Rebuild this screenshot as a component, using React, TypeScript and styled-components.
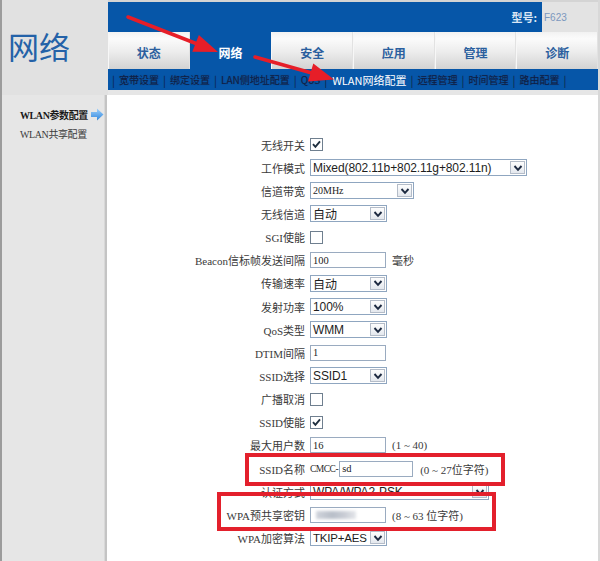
import React from "react";
import styled, { createGlobalStyle } from "styled-components";

const Blue = "#0656a8";
const LabelGray = "#3a3a3a";
const CJK = `"Noto Sans CJK SC", "Liberation Sans", sans-serif`;

const GlobalStyle = createGlobalStyle`
  html, body {
    margin: 0;
    padding: 0;
    background: #ffffff;
  }
  body {
    font-family: ${CJK};
  }
`;

type Row = { label: string; control: React.ReactNode };

const tabs = ["状态", "网络", "安全", "应用", "管理", "诊断"];
const subLinks = [
  "宽带设置",
  "绑定设置",
  "LAN侧地址配置",
  "QoS",
  "WLAN网络配置",
  "远程管理",
  "时间管理",
  "路由配置",
];

export default function App() {
  const rows: Row[] = [
    { label: "无线开关", control: <Check checked /> },
    {
      label: "工作模式",
      control: <Select width={217} value="Mixed(802.11b+802.11g+802.11n)" />,
    },
    { label: "信道带宽", control: <Select width={104} value="20MHz" small /> },
    { label: "无线信道", control: <Select width={77} value="自动" /> },
    { label: "SGI使能", control: <Check /> },
    {
      label: "Beacon信标帧发送间隔",
      control: (
        <>
          <TextBox>100</TextBox>
          <Hint>毫秒</Hint>
        </>
      ),
    },
    { label: "传输速率", control: <Select width={77} value="自动" /> },
    { label: "发射功率", control: <Select width={77} value="100%" /> },
    { label: "QoS类型", control: <Select width={77} value="WMM" /> },
    { label: "DTIM间隔", control: <TextBox>1</TextBox> },
    { label: "SSID选择", control: <Select width={77} value="SSID1" /> },
    { label: "广播取消", control: <Check /> },
    { label: "SSID使能", control: <Check checked /> },
    {
      label: "最大用户数",
      control: (
        <>
          <TextBox>16</TextBox>
          <Hint>(1 ~ 40)</Hint>
        </>
      ),
    },
    {
      label: "SSID名称",
      control: (
        <>
          <Prefix>CMCC-</Prefix>
          <TextBox $width={74}>sd</TextBox>
          <Hint $gap={7}>(0 ~ 27位字符)</Hint>
        </>
      ),
    },
    { label: "认证方式", control: <Select width={179} value="WPA/WPA2-PSK" /> },
    {
      label: "WPA预共享密钥",
      control: (
        <>
          <TextBox>
            <Smudge />
          </TextBox>
          <Hint>(8 ~ 63 位字符)</Hint>
        </>
      ),
    },
    {
      label: "WPA加密算法",
      control: <Select width={77} value="TKIP+AES" tight />,
    },
  ];

  return (
    <>
      <GlobalStyle />
      <Page>
        <Logo>网络</Logo>
        <Header>
          <TopBar>
            <ModelLabel>型号:</ModelLabel>
            <ModelBox>F623</ModelBox>
          </TopBar>
          <Tabs>
            {tabs.map((t) => (
              <Tab key={t} $active={t === "网络"}>
                {t}
              </Tab>
            ))}
          </Tabs>
          <SubNav>
            <Sep>|</Sep>
            {subLinks.map((s) => (
              <React.Fragment key={s}>
                <SubLink $active={s === "WLAN网络配置"}>{s}</SubLink>
                <Sep>|</Sep>
              </React.Fragment>
            ))}
          </SubNav>
        </Header>

        <Sidebar>
          <SideItem $active>
            WLAN参数配置
            <SideArrow />
          </SideItem>
          <SideItem>WLAN共享配置</SideItem>
        </Sidebar>

        <Content>
          <Form>
            {rows.map((r) => (
              <React.Fragment key={r.label}>
                <Label>{r.label}</Label>
                <Field>{r.control}</Field>
              </React.Fragment>
            ))}
          </Form>
        </Content>

        <Marks viewBox="0 0 600 561">
          <line x1="128" y1="17" x2="196" y2="43.5" />
          <polygon points="218,52 192.3,51.8 198.9,34.9" />
          <line x1="255" y1="57" x2="310" y2="72.5" />
          <polygon points="334,79.5 308,81.6 313.3,63.6" />
          <rect x="247" y="455" width="256" height="29" />
          <rect x="219" y="494" width="275" height="35" />
        </Marks>
      </Page>
    </>
  );
}

function Check({ checked }: { checked?: boolean }) {
  return (
    <CheckBox>
      {checked && (
        <svg width="11" height="11" viewBox="0 0 11 11">
          <path
            d="M2 5.2 L4.4 7.8 L9 2.4"
            fill="none"
            stroke="#1f2f3f"
            strokeWidth="1.9"
          />
        </svg>
      )}
    </CheckBox>
  );
}

function Select({
  width,
  value,
  small,
  tight,
}: {
  width: number;
  value: string;
  small?: boolean;
  tight?: boolean;
}) {
  return (
    <SelectBox $width={width}>
      <SelectText $small={small} $tight={tight}>
        {value}
      </SelectText>
      <DropBtn>
        <svg width="10" height="8" viewBox="0 0 10 8">
          <path
            d="M1.5 2 L5 5.8 L8.5 2"
            fill="none"
            stroke="#1c2940"
            strokeWidth="1.9"
          />
        </svg>
      </DropBtn>
    </SelectBox>
  );
}

function SideArrow() {
  return (
    <svg
      width="13"
      height="13"
      viewBox="0 0 13 13"
      style={{ marginLeft: 3, flexShrink: 0 }}
    >
      <defs>
        <linearGradient id="sa" x1="0" y1="0" x2="0" y2="1">
          <stop offset="0" stopColor="#9fd0fb" />
          <stop offset="1" stopColor="#2f86dc" />
        </linearGradient>
      </defs>
      <polygon points="0,4 6,4 6,0.5 12.5,6.5 6,12.5 6,9 0,9" fill="url(#sa)" />
    </svg>
  );
}

const Page = styled.div`
  position: relative;
  width: 600px;
  height: 561px;
  overflow: hidden;
  box-sizing: border-box;
  padding: 0 2px 0 2px;
  background: #d8d8d8;
  box-shadow: inset 2px 0 0 #9c9c9c;
  display: grid;
  grid-template-columns: 106px 1fr;
  grid-template-rows: 95px 1fr;
`;

const Logo = styled.div`
  background: #e1e1e1;
  color: #2462a8;
  font-family: ${CJK};
  font-size: 31px;
  line-height: 1;
  padding: 30px 0 0 6px;
`;

const Header = styled.div`
  display: flex;
  flex-direction: column;
  padding-top: 2px;
  background: linear-gradient(#d4d4d4 0 2px, #e6e6e6 2px);
`;

const TopBar = styled.div`
  height: 30px;
  background: ${Blue};
  display: flex;
  justify-content: flex-end;
  align-items: stretch;
`;

const ModelLabel = styled.div`
  align-self: center;
  margin-right: 5px;
  color: #dbe6f4;
  font-size: 11px;
  font-weight: 700;
  font-family: ${CJK};
`;

const ModelBox = styled.div`
  width: 56px;
  background: #e3e3e3;
  color: #7b98be;
  font-family: "Liberation Sans", sans-serif;
  font-size: 10px;
  display: flex;
  align-items: center;
  padding-left: 2px;
  box-sizing: border-box;
`;

const Tabs = styled.div`
  height: 37px;
  display: grid;
  grid-template-columns: repeat(6, 1fr);
`;

const Tab = styled.div<{ $active?: boolean }>`
  display: flex;
  align-items: center;
  justify-content: center;
  padding-top: 3px;
  box-sizing: border-box;
  font-family: ${CJK};
  font-size: 12px;
  font-weight: 700;
  color: ${(p) => (p.$active ? "#ffffff" : "#2b5f9e")};
  background: ${(p) =>
    p.$active
      ? Blue
      : "linear-gradient(#f2f2f2 0%, #fbfbfb 18%, #ececec 55%, #d3d3d3 100%)"};
  border-right: 1px solid ${(p) => (p.$active ? Blue : "#e2e2e2")};
  border-left: 1px solid ${(p) => (p.$active ? Blue : "#f7f7f7")};
`;

const SubNav = styled.div`
  height: 21px;
  background: ${Blue};
  display: flex;
  align-items: center;
  padding-left: 4px;
  font-family: ${CJK};
  font-size: 10px;
  white-space: nowrap;
`;

const Sep = styled.span`
  color: #0e2246;
  margin: 0 4px 0 0;
  font-size: 11px;
`;

const SubLink = styled.span<{ $active?: boolean }>`
  color: ${(p) => (p.$active ? "#ffffff" : "#0c1f45")};
  font-size: ${(p) => (p.$active ? "11px" : "10px")};
  margin-right: 4px;
  margin-left: ${(p) => (p.$active ? "1px" : "0")};
  text-shadow: ${(p) => (p.$active ? "none" : "0 0 1px #1d3a70")};
`;

const Sidebar = styled.div`
  background: #e6e6e6;
  border-right: 3px solid #c4c4c4;
  box-shadow: inset -1px 0 0 #d8d8d8;
  padding: 10px 0 0 18px;
  display: flex;
  flex-direction: column;
`;

const SideItem = styled.div<{ $active?: boolean }>`
  display: flex;
  align-items: center;
  height: 19px;
  white-space: nowrap;
  font-family: "Liberation Serif", ${CJK};
  font-size: 10px;
  letter-spacing: -0.4px;
  font-weight: ${(p) => (p.$active ? 700 : 400)};
  color: ${(p) => (p.$active ? "#1a1a1a" : "#3a3a3a")};
`;

const Content = styled.div`
  background: #ffffff;
  margin-left: -1px;
`;

const Form = styled.div`
  display: grid;
  grid-template-columns: 198px 1fr;
  grid-auto-rows: 23.15px;
  column-gap: 5px;
  align-items: center;
  padding-top: 38px;
`;

const Label = styled.div`
  text-align: right;
  font-family: "Liberation Serif", ${CJK};
  font-size: 11px;
  color: ${LabelGray};
  white-space: nowrap;
`;

const Field = styled.div`
  display: flex;
  align-items: center;
  height: 100%;
`;

const CheckBox = styled.div`
  width: 13px;
  height: 13px;
  box-sizing: border-box;
  border: 1px solid #6f7f8f;
  background: #ffffff;
  display: flex;
  align-items: center;
  justify-content: center;
`;

const SelectBox = styled.div<{ $width: number }>`
  width: ${(p) => p.$width}px;
  height: 17px;
  box-sizing: border-box;
  border: 1px solid #8fa6c0;
  background: #ffffff;
  display: flex;
  align-items: center;
`;

const SelectText = styled.span<{ $small?: boolean; $tight?: boolean }>`
  flex: 1;
  padding-left: 2px;
  overflow: hidden;
  white-space: nowrap;
  color: #1d1d1d;
  font-family: ${(p) =>
    p.$small ? `"Liberation Serif", serif` : `"Liberation Sans", ${CJK}`};
  font-size: ${(p) => (p.$small ? "10px" : p.$tight ? "11.5px" : "12px")};
  letter-spacing: ${(p) => (p.$tight ? "-0.2px" : p.$small ? "0" : "-0.1px")};
`;

const DropBtn = styled.div`
  width: 15px;
  height: 13px;
  margin-right: 1px;
  flex-shrink: 0;
  box-sizing: border-box;
  border: 1px solid #b4bcc8;
  background: linear-gradient(#fdfdfd, #e4e8ee);
  display: flex;
  align-items: center;
  justify-content: center;
`;

const TextBox = styled.div<{ $width?: number }>`
  width: ${(p) => p.$width ?? 76}px;
  height: 16px;
  flex-shrink: 0;
  box-sizing: border-box;
  border: 1px solid #9aabc0;
  background: #ffffff;
  padding-left: 2px;
  display: flex;
  align-items: center;
  font-family: "Liberation Serif", serif;
  font-size: 10.5px;
  color: #222;
`;

const Prefix = styled.span`
  flex-shrink: 0;
  margin-right: 1px;
  white-space: nowrap;
  font-family: "Liberation Serif", serif;
  font-size: 9.5px;
  letter-spacing: -0.5px;
  color: #2a2a2a;
`;

const Hint = styled.span<{ $gap?: number }>`
  margin-left: ${(p) => p.$gap ?? 6}px;
  font-family: "Liberation Serif", ${CJK};
  font-size: 11px;
  color: ${LabelGray};
  white-space: pre;
`;

const Smudge = styled.span`
  display: block;
  width: 40px;
  height: 8px;
  margin-left: 3px;
  background: linear-gradient(90deg, #d0d4dc, #b8bec8 40%, #c8ccd4 70%, #e4e6ea);
  filter: blur(1.5px);
`;

const Marks = styled.svg`
  position: absolute;
  left: 0;
  top: 0;
  width: 600px;
  height: 561px;
  pointer-events: none;

  line {
    stroke: #e61e28;
    stroke-width: 3.5;
    stroke-linecap: round;
  }
  polygon {
    fill: #e61e28;
  }
  rect {
    fill: none;
    stroke: #e3202c;
    stroke-width: 4;
  }
`;
